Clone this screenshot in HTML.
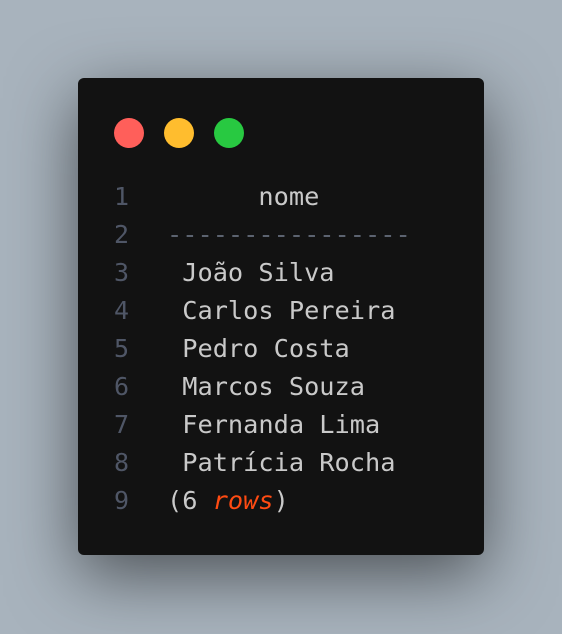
<!DOCTYPE html>
<html><head><style>
html,body{margin:0;padding:0}
body{width:562px;height:634px;background:#a8b3bd;position:relative;overflow:hidden;font-family:"DejaVu Sans Mono","Liberation Mono",monospace}
.card{position:absolute;left:78px;top:78px;width:406px;height:477px;background:#121212;border-radius:6px;box-shadow:0 20px 68px rgba(0,0,0,0.55)}
.dot{position:absolute;top:118px;width:30px;height:30px;border-radius:50%}
.ln{position:absolute;left:114px;width:20px;color:#4f5666;font-size:25px;line-height:30px}
.tx{position:absolute;left:167px;color:#c9c9c9;font-size:25.3px;line-height:30px;white-space:pre}
</style></head><body>
<div class="card"></div>
<div class="dot" style="left:114px;background:#ff5f5a"></div>
<div class="dot" style="left:164px;background:#ffbd2e"></div>
<div class="dot" style="left:214px;background:#28c941"></div>
<div class="ln" style="top:182px">1</div><div class="tx" style="top:182px">      nome</div>
<div class="ln" style="top:220px">2</div><div class="tx" style="top:220px;color:#5c6370">----------------</div>
<div class="ln" style="top:258px">3</div><div class="tx" style="top:258px"> João Silva</div>
<div class="ln" style="top:296px">4</div><div class="tx" style="top:296px"> Carlos Pereira</div>
<div class="ln" style="top:334px">5</div><div class="tx" style="top:334px"> Pedro Costa</div>
<div class="ln" style="top:372px">6</div><div class="tx" style="top:372px"> Marcos Souza</div>
<div class="ln" style="top:410px">7</div><div class="tx" style="top:410px"> Fernanda Lima</div>
<div class="ln" style="top:448px">8</div><div class="tx" style="top:448px"> Patrícia Rocha</div>
<div class="ln" style="top:486px">9</div><div class="tx" style="top:486px">(6 <i style="color:#ff4b12">rows</i>)</div>
</body></html>
